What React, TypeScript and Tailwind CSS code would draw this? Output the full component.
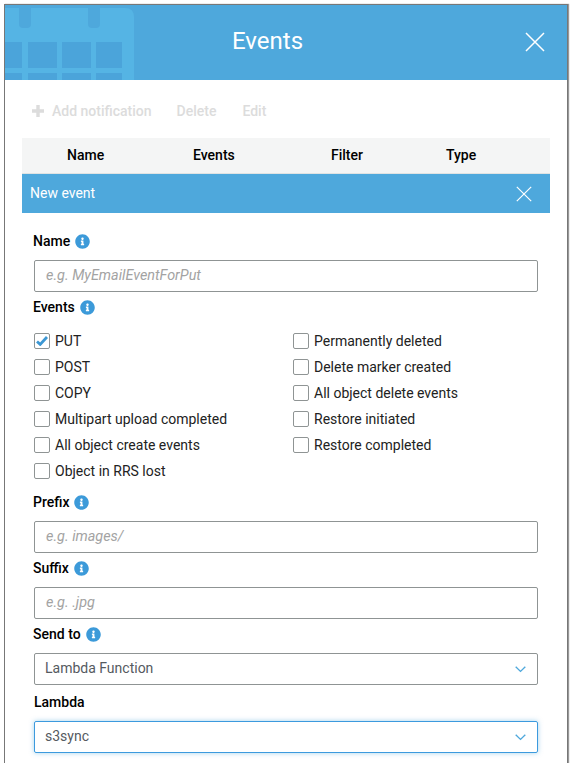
import React from "react";
import { FaInfoCircle } from "react-icons/fa";

const leftEvents = [
  { label: "PUT", checked: true },
  { label: "POST" },
  { label: "COPY" },
  { label: "Multipart upload completed" },
  { label: "All object create events" },
  { label: "Object in RRS lost" },
];

const rightEvents = [
  { label: "Permanently deleted" },
  { label: "Delete marker created" },
  { label: "All object delete events" },
  { label: "Restore initiated" },
  { label: "Restore completed" },
];

const CloseIcon = ({ size }: { size: number }) => (
  <svg width={size} height={size} viewBox="0 0 20 20" fill="none" stroke="white" strokeWidth="1.5">
    <path d="M1 1L19 19M19 1L1 19" />
  </svg>
);

const Chevron = () => (
  <svg width="11" height="7" viewBox="0 0 11 7" fill="none" stroke="#4ea8dc" strokeWidth="1.4" className="mr-[11px]">
    <path d="M0.7 0.8L5.5 5.4L10.3 0.8" />
  </svg>
);

const Label = ({ text, info }: { text: string; info?: boolean }) => (
  <div className={`flex h-5 items-center gap-[5px] text-[14px] font-medium text-black ${info ? "-ml-px" : ""}`}>
    <span>{text}</span>
    {info && <FaInfoCircle className="text-[15px] text-[#3c9ad9]" />}
  </div>
);

const TextField = ({ placeholder }: { placeholder: string }) => (
  <div className="flex h-8 items-center rounded-[2px] border border-[#8f9494] px-[11px] text-[14.4px] italic text-[#a3a3a3]">
    {placeholder}
  </div>
);

const SelectField = ({ value, focused }: { value: string; focused?: boolean }) => (
  <div
    className={`flex h-8 items-center justify-between rounded-[2px] border pl-[10px] text-[14px] text-[#555a5f] ${
      focused ? "border-[#3c9ade] shadow-[0_0_5px_rgba(78,168,220,0.5)]" : "border-[#8f9494]"
    }`}
  >
    <span className="pb-px">{value}</span>
    <Chevron />
  </div>
);

const CheckRow = ({ label, checked }: { label: string; checked?: boolean }) => (
  <div className="flex h-[26px] items-center gap-[5px] text-[14px] text-[#222]">
    <span className="flex h-4 w-4 items-center justify-center rounded-[2px] border border-[#8f9494] bg-white">
      {checked && (
        <svg width="12" height="10" viewBox="0 0 12 10" fill="none" stroke="#3c97d3" strokeWidth="2.8">
          <path d="M1 5.5L4.2 8.4L11 1" />
        </svg>
      )}
    </span>
    <span>{label}</span>
  </div>
);

export default function App() {
  return (
    <div className="h-[763px] overflow-hidden bg-white pl-1 pr-[5px] pt-1 font-['Roboto',sans-serif]">
      <div className="h-[780px] border border-[#777] shadow-[1px_0_1px_#999]">
        {/* modal header */}
        <div className="relative flex h-[75px] items-center justify-center overflow-hidden bg-[#4ea8dc]">
          <svg width="134" height="75" viewBox="0 0 134 75" className="absolute left-0 top-0">
            <path d="M0 3H120Q129 3 129 12V75H0Z" fill="#55b4e4" />
            <rect x="14" y="-4" width="12" height="27" rx="4" fill="#4ea8dc" />
            <rect x="83" y="-4" width="12" height="27" rx="4" fill="#4ea8dc" />
            <rect x="37" y="-2" width="34" height="5" fill="#4ea8dc" />
            <g fill="#4ba4da">
              <rect x="0" y="37" width="17" height="26" />
              <rect x="23" y="37" width="29" height="26" />
              <rect x="57" y="37" width="29" height="26" />
              <rect x="91" y="37" width="26" height="26" />
              <rect x="0" y="68" width="17" height="7" />
              <rect x="23" y="68" width="29" height="7" />
              <rect x="57" y="68" width="29" height="7" />
              <rect x="91" y="68" width="26" height="7" />
            </g>
          </svg>
          <span className="relative mb-[3px] mr-[37px] text-[24px] text-white">Events</span>
          <div className="absolute right-[22px] top-[27px]">
            <CloseIcon size={20} />
          </div>
        </div>

        <div className="px-[17px]">
          {/* toolbar */}
          <div className="flex h-[58px] items-center pl-[10px] pt-1 text-[14px] font-medium text-[#dcdcdc]">
            <span className="flex items-center gap-2">
              <svg width="12" height="12" viewBox="0 0 12 12" fill="#dcdcdc">
                <path d="M4.3 0H7.7V4.3H12V7.7H7.7V12H4.3V7.7H0V4.3H4.3Z" />
              </svg>
              Add notification
            </span>
            <span className="ml-[25px]">Delete</span>
            <span className="ml-[26px]">Edit</span>
          </div>

          {/* table head */}
          <div className="grid h-9 grid-cols-[126px_138px_115px_1fr] items-center border-b border-[#dfe3e3] bg-[#f4f5f5] pl-[45px] text-[14px] font-medium text-black">
            <span>Name</span>
            <span>Events</span>
            <span>Filter</span>
            <span>Type</span>
          </div>

          <div className="flex h-[39px] items-center justify-between bg-[#4ea8dc] pl-2 pr-[18px] text-[14px] text-white">
            <span>New event</span>
            <CloseIcon size={16} />
          </div>

          {/* new event form */}
          <div className="px-3 pt-[18px]">
            <Label text="Name" info />
            <div className="mt-[9px]">
              <TextField placeholder="e.g. MyEmailEventForPut" />
            </div>
            <div className="mt-[5px]">
              <Label text="Events" info />
            </div>
            <div className="mt-[11px] grid grid-cols-[259px_1fr]">
              <div>
                {leftEvents.map((e) => (
                  <CheckRow key={e.label} label={e.label} checked={e.checked} />
                ))}
              </div>
              <div>
                {rightEvents.map((e) => (
                  <CheckRow key={e.label} label={e.label} />
                ))}
              </div>
            </div>
            <div className="mt-2">
              <Label text="Prefix" info />
            </div>
            <div className="mt-[9px]">
              <TextField placeholder="e.g. images/" />
            </div>
            <div className="mt-[5px]">
              <Label text="Suffix" info />
            </div>
            <div className="mt-[9px]">
              <TextField placeholder="e.g. .jpg" />
            </div>
            <div className="mt-[5px]">
              <Label text="Send to" info />
            </div>
            <div className="mt-[9px]">
              <SelectField value="Lambda Function" />
            </div>
            <div className="mt-[7px]">
              <Label text="Lambda" />
            </div>
            <div className="mt-[9px]">
              <SelectField value="s3sync" focused />
            </div>
          </div>
        </div>
      </div>
    </div>
  );
}
